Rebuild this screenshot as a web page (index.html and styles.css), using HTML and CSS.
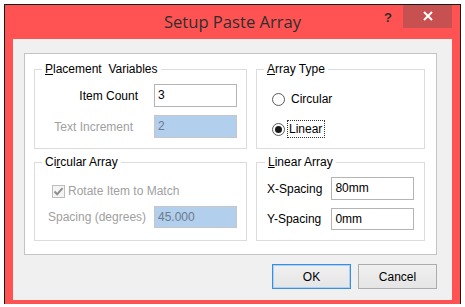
FILE: index.html
```html
<!DOCTYPE html>
<html>
<head>
<meta charset="utf-8">
<title>Setup Paste Array</title>
<link rel="stylesheet" href="styles.css">
</head>
<body>
<div class="window">
  <div class="titlebar">
    <div class="tb-left"></div>
    <div class="title">Setup Paste Array</div>
    <div class="tb-right">
      <span class="help">?</span>
      <span class="close"><svg width="10" height="10" viewBox="0 0 10 10"><path d="M1 1L9 9M9 1L1 9" stroke="#fff" stroke-width="2" fill="none"/></svg></span>
    </div>
  </div>
  <div class="content">
    <div class="panel">
      <div class="group">
        <div class="legend"><u>P</u>lacement&nbsp; Variables</div>
        <div class="rows rows-placement">
          <span class="lbl">Item Count</span><div class="field">3</div>
          <span class="lbl dis lbl-inc">Text Increment</span><div class="field disabled">2</div>
        </div>
      </div>
      <div class="group">
        <div class="legend"><u>A</u>rray Type</div>
        <div class="radios">
          <div class="radio-row"><span class="radio"></span><span class="rlbl">Circular</span></div>
          <div class="radio-row"><span class="radio on"></span><span class="rlbl focus">Linear</span></div>
        </div>
      </div>
      <div class="group">
        <div class="legend">Ci<u>r</u>cular Array</div>
        <div class="check-row">
          <span class="check"><svg width="11" height="11" viewBox="0 0 11 11"><path d="M1.5 5.5L4.2 8.3L9.5 2.2" stroke="#8f8f8f" stroke-width="2" fill="none"/></svg></span>
          <span class="lbl dis">Rotate Item to Match</span>
        </div>
        <div class="rows rows-circ">
          <span class="lbl dis">Spacing (degrees)</span><div class="field disabled">45.000</div>
        </div>
      </div>
      <div class="group">
        <div class="legend legend-lin"><u>L</u>inear Array</div>
        <div class="rows rows-lin">
          <span class="lbl">X-Spacing</span><div class="field">80mm</div>
          <span class="lbl">Y-Spacing</span><div class="field">0mm</div>
        </div>
      </div>
    </div>
    <div class="buttons">
      <div class="btn default">OK</div>
      <div class="btn">Cancel</div>
    </div>
  </div>
</div>
</body>
</html>
```

FILE: styles.css
```css
* { box-sizing: border-box; }
html, body { margin: 0; padding: 0; background: #ffffff; }
body { font-family: "Liberation Sans", Arial, sans-serif; font-size: 12px; color: #000; }

.window {
  margin: 4px 0 0 4px;
  width: 457px;
  height: 300px;
  background: #ff5353;
  border: 1px solid #1a1a1a;
  border-bottom: none;
  display: flex;
  flex-direction: column;
}

.titlebar {
  height: 34px;
  display: grid;
  grid-template-columns: 1fr auto 1fr;
  align-items: start;
}
.title {
  font-family: "Open Sans", "Liberation Sans", sans-serif;
  font-size: 16.6px;
  color: #2e2e2e;
  line-height: 34px;
}
.tb-right {
  display: flex;
  justify-content: flex-end;
  align-items: flex-start;
  padding-right: 8px;
}
.help {
  font-family: "Liberation Sans", sans-serif;
  font-weight: bold;
  font-size: 13px;
  color: #2e2e2e;
  margin-top: 5px;
  margin-right: 11px;
  line-height: 16px;
}
.close {
  width: 49px;
  height: 23px;
  background: #c75050;
  display: flex;
  align-items: center;
  justify-content: center;
}
.close svg { display: block; margin-top: -1px; }

.content {
  flex: 1;
  margin: 0 8px 4px 8px;
  background: #f0f0f0;
  padding: 14px 15px 0 11px;
}

.panel {
  height: 202px;
  background: #fff;
  border: 1px solid #c4c4c4;
  display: grid;
  grid-template-columns: 213px 169px;
  grid-template-rows: 80px 79px;
  column-gap: 9px;
  row-gap: 13px;
  padding: 15px 0 0 9px;
}

.group {
  border: 1px solid #dcdcdc;
  display: flex;
  flex-direction: column;
}
.legend {
  align-self: flex-start;
  margin: -8px 0 0 7px;
  padding: 0 3px;
  background: #fff;
  line-height: 14px;
  white-space: nowrap;
}
.legend-lin { margin-left: 8px; }
.legend u, .lbl u { text-decoration: underline; }

.rows {
  display: grid;
  grid-template-columns: 1fr 83px;
  column-gap: 16px;
  align-items: center;
  padding-right: 9px;
}
.rows-placement { margin-top: 8px; row-gap: 8px; }
.rows-placement .lbl { justify-self: end; }
.rows-placement .lbl-inc { margin-right: 5px; }
.rows-circ { margin-top: 8px; column-gap: 4px; padding-left: 13px; }
.rows-lin { grid-template-columns: auto 83px; column-gap: 9px; padding-left: 10px; justify-content: start; margin-top: 8px; row-gap: 8px; }

.lbl { white-space: nowrap; line-height: 14px; }
.dis { color: #a0a0a0; }

.field {
  height: 23px;
  border: 1px solid #b4b4b4;
  background: #fff;
  padding: 0 0 0 3px;
  line-height: 21px;
  white-space: nowrap;
}
.field.disabled {
  background: #b2cfee;
  border-color: #c6c6c6;
  color: #6d7a8a;
}
.rows-circ .field, .rows-lin .field + .lbl + .field { height: 22px; line-height: 20px; }

.radios {
  display: flex;
  flex-direction: column;
  gap: 14px;
  padding-left: 15px;
  margin-top: 15px;
}
.radio-row { display: flex; align-items: center; gap: 5px; height: 16px; }
.radio {
  width: 13px;
  height: 13px;
  border-radius: 50%;
  border: 1px solid #5a5a5a;
  background: #fff;
  display: flex;
  align-items: center;
  justify-content: center;
}
.radio.on::after {
  content: "";
  width: 7px;
  height: 7px;
  border-radius: 50%;
  background: #1a1a1a;
}
.rlbl { line-height: 14px; padding: 1px 1px; }
.rlbl.focus { outline: 1px dotted #333; margin-left: -2px; padding: 1px 2px 1px 1px; }

.check-row {
  display: flex;
  align-items: center;
  gap: 3px;
  margin: 15px 0 0 17px;
}
.check {
  width: 13px;
  height: 13px;
  border: 1px solid #bdbdbd;
  background: #f4f4f4;
  display: flex;
  align-items: center;
  justify-content: center;
}
.check svg { display: block; }

.buttons {
  display: flex;
  justify-content: flex-end;
  gap: 7px;
  margin-top: 9px;
}
.btn {
  width: 79px;
  height: 25px;
  border: 1px solid #acacac;
  background: linear-gradient(#f0f0f0, #e5e5e5);
  display: flex;
  align-items: center;
  justify-content: center;
}
.btn.default { border-color: #3c8de0; box-shadow: inset 0 0 0 1px #a8d2f7; }
```
